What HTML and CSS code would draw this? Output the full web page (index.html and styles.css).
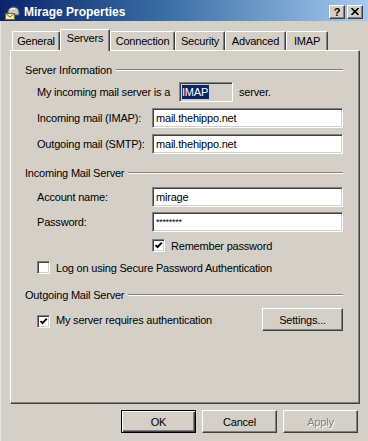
FILE: index.html
```html
<!DOCTYPE html>
<html lang="en">

<head>
	<meta charset="UTF-8">
	<title>Mirage Properties</title>
	<link rel="stylesheet" href="styles.css">
</head>

<body>
	<div class="window">
		<div class="titlebar">
			<svg class="app-icon" width="16" height="16" viewBox="0 0 16 16">
				<path d="M4 10 Q3 4 9 3 Q15 3 15 9 L15 11 L4 11 Z" fill="#c8c8c8" stroke="#5a5a5a" stroke-width="1"/>
				<path d="M6 6 Q8 4 11 4.5" fill="none" stroke="#ffffff" stroke-width="1"/>
				<rect x="1.5" y="9.5" width="9" height="6" fill="#f4ecb0" stroke="#7a6a30" stroke-width="1"/>
				<path d="M1.5 9.5 L6 13 L10.5 9.5" fill="none" stroke="#7a6a30" stroke-width="1"/>
			</svg>
			<span class="title">Mirage Properties</span>
			<div class="caption-buttons">
				<span class="cap-btn">?</span>
				<span class="cap-btn">
					<svg width="8" height="7" viewBox="0 0 8 7">
						<path d="M0.5 0 L7.5 7 M7.5 0 L0.5 7" stroke="#000" stroke-width="1.6"/>
					</svg>
				</span>
			</div>
		</div>
		<div class="content">
			<div class="tabs">
				<div class="tab tab-general">General</div>
				<div class="tab tab-servers active">Servers</div>
				<div class="tab tab-connection">Connection</div>
				<div class="tab tab-security">Security</div>
				<div class="tab tab-advanced">Advanced</div>
				<div class="tab tab-imap">IMAP</div>
			</div>
			<div class="panel">
				<div class="group-title"><span>Server Information</span></div>
				<div class="group">
					<div class="row first">
						<span class="label wide">My incoming mail server is a</span>
						<span class="readonly"><span class="selected-text">IMAP</span></span>
						<span class="suffix">server.</span>
					</div>
					<div class="row">
						<span class="label">Incoming mail (IMAP):</span>
						<span class="field">mail.thehippo.net</span>
					</div>
					<div class="row">
						<span class="label">Outgoing mail (SMTP):</span>
						<span class="field">mail.thehippo.net</span>
					</div>
				</div>

				<div class="group-title second"><span>Incoming Mail Server</span></div>
				<div class="group">
					<div class="row account">
						<span class="label">Account name:</span>
						<span class="field">mirage</span>
					</div>
					<div class="row password">
						<span class="label">Password:</span>
						<span class="field stars">********</span>
					</div>
					<div class="check-row remember">
						<span class="checkbox checked">
							<svg width="9" height="9" viewBox="0 0 9 9"><path d="M1.5 4 L3.5 6.2 L7.8 1.6" fill="none" stroke="#000" stroke-width="1.8"/></svg>
						</span>
						<span>Remember password</span>
					</div>
					<div class="check-row logon">
						<span class="checkbox"></span>
						<span>Log on using Secure Password Authentication</span>
					</div>
				</div>

				<div class="group-title third"><span>Outgoing Mail Server</span></div>
				<div class="group">
					<div class="check-row auth">
						<span class="checkbox checked">
							<svg width="9" height="9" viewBox="0 0 9 9"><path d="M1.5 4 L3.5 6.2 L7.8 1.6" fill="none" stroke="#000" stroke-width="1.8"/></svg>
						</span>
						<span>My server requires authentication</span>
						<span class="button settings">Settings...</span>
					</div>
				</div>
			</div>
			<div class="buttons">
				<span class="button default">OK</span>
				<span class="button">Cancel</span>
				<span class="button disabled">Apply</span>
			</div>
		</div>
	</div>
</body>

</html>
```

FILE: styles.css
```css
body {
	margin: 0px;
	padding: 0px;
	overflow: hidden;
	background-color: #D4D0C8;
	font-family: "Liberation Sans", Arial, sans-serif;
	font-size: 11px;
	letter-spacing: -0.2px;
	color: #000;
}
.window {
	width: 368px;
	height: 441px;
	box-shadow: inset 1px 0 #E8E6E0;
}
.titlebar {
	box-sizing: border-box;
	height: 21px;
	padding: 2px 5px 0 4px;
	display: flex;
	align-items: center;
	background: linear-gradient(to right, #0A246A, #3A6EA5 45%, #A6CAF0);
	color: #fff;
}
.app-icon {
	margin-right: 4px;
	flex: none;
}
.title {
	font-size: 12px;
	font-weight: bold;
	letter-spacing: 0;
}
.caption-buttons {
	margin-left: auto;
	display: flex;
	gap: 2px;
}
.cap-btn {
	box-sizing: border-box;
	width: 16px;
	height: 14px;
	display: flex;
	align-items: center;
	justify-content: center;
	background-color: #D4D0C8;
	border: 1px solid;
	border-color: #fff #404040 #404040 #fff;
	box-shadow: inset -1px -1px #808080;
	color: #000;
	font-weight: bold;
	font-size: 11px;
	line-height: 12px;
}
.content {
	padding: 0 8px 0 10px;
}

/* tabs */
.tabs {
	margin-top: 8px;
	padding-left: 2px;
	height: 21px;
	display: flex;
	align-items: flex-end;
}
.tab {
	box-sizing: border-box;
	height: 19px;
	padding-top: 3px;
	text-align: center;
	border-top: 1px solid #fff;
	border-left: 1px solid #fff;
	border-right: 1px solid #404040;
	box-shadow: inset -1px 0 #808080;
	border-radius: 2px 2px 0 0;
}
.tab.active {
	position: relative;
	z-index: 1;
	height: 22px;
	margin-bottom: -1px;
	padding-top: 2px;
	background-color: #D4D0C8;
}
.tab-general { width: 48px; }
.tab-servers { width: 50px; }
.tab-connection { width: 65px; }
.tab-security { width: 50px; }
.tab-advanced { width: 61px; }
.tab-imap { width: 42px; }

/* tab page */
.panel {
	box-sizing: border-box;
	height: 354px;
	padding: 12px 16px 0 14px;
	border: 1px solid;
	border-color: #fff #404040 #404040 #fff;
	box-shadow: inset -1px -1px #808080;
}
.group-title {
	height: 14px;
	display: flex;
	align-items: center;
	gap: 4px;
}
.group-title::after {
	content: "";
	flex: 1;
	height: 0;
	border-top: 1px solid #808080;
	border-bottom: 1px solid #fff;
}
.group-title.second {
	margin-top: 12px;
}
.group-title.third {
	margin-top: 14px;
}
.group {
	padding-left: 12px;
}
.row {
	display: flex;
	align-items: center;
	height: 20px;
	margin-top: 6px;
}
.row.first {
	margin-top: 5px;
}
.row.account {
	margin-top: 7px;
}
.row.password {
	margin-top: 5px;
}
.label {
	width: 115px;
	flex: none;
}
.label.wide {
	width: 142px;
}
.field,
.readonly {
	box-sizing: border-box;
	height: 20px;
	padding: 3px 3px 0 3px;
	border: 1px solid;
	border-color: #808080 #fff #fff #808080;
	box-shadow: inset 1px 1px #404040, inset -1px -1px #D4D0C8;
	background-color: #fff;
	white-space: nowrap;
}
.field {
	flex: 1;
}
.field.stars {
	font-size: 9px;
	letter-spacing: -0.3px;
	padding-top: 4px;
}
.readonly {
	width: 54px;
	padding: 2px 2px 0 2px;
	background-color: #D4D0C8;
}
.selected-text {
	display: inline-block;
	padding: 1px 1px 1px 0;
	background-color: #0A246A;
	color: #fff;
}
.suffix {
	margin-left: 6px;
}
.check-row {
	display: flex;
	align-items: center;
	height: 13px;
}
.check-row.remember {
	margin-top: 7px;
	padding-left: 115px;
}
.check-row.logon {
	margin-top: 9px;
}
.check-row.auth {
	height: 23px;
	margin-top: 6px;
}
.checkbox {
	box-sizing: border-box;
	width: 13px;
	height: 13px;
	margin-right: 6px;
	display: flex;
	align-items: center;
	justify-content: center;
	flex: none;
	border: 1px solid;
	border-color: #808080 #fff #fff #808080;
	box-shadow: inset 1px 1px #404040, inset -1px -1px #D4D0C8;
	background-color: #fff;
}
.check-row.auth .checkbox {
	margin-top: 3px;
}

/* push buttons */
.button {
	box-sizing: border-box;
	width: 75px;
	height: 23px;
	display: flex;
	align-items: center;
	justify-content: center;
	border: 1px solid;
	border-color: #fff #404040 #404040 #fff;
	box-shadow: inset -1px -1px #808080;
	background-color: #D4D0C8;
}
.button.settings {
	width: 81px;
	margin-left: auto;
}
.button.default {
	border-color: #000;
	box-shadow: inset 1px 1px #fff, inset -1px -1px #404040, inset -2px -2px #808080;
}
.button.disabled {
	color: #808080;
	text-shadow: 1px 1px #fff;
}
.buttons {
	margin-top: 6px;
	padding-right: 2px;
	display: flex;
	justify-content: flex-end;
	gap: 6px;
}
```
